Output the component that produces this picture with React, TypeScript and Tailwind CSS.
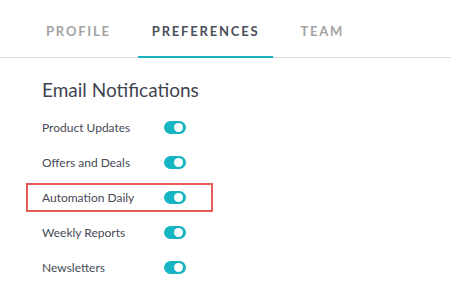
import React from "react";

const Toggle = () => (
  <div className="relative h-[13px] w-[22px] rounded-full bg-[#17b5c1]">
    <div className="absolute right-[3px] top-[2px] h-[9px] w-[9px] rounded-full bg-white" />
  </div>
);

const rows = ["Product Updates", "Offers and Deals", "Automation Daily", "Weekly Reports", "Newsletters"];

export default function App() {
  return (
    <div className="h-[301px] w-[451px] bg-white" style={{ fontFamily: "Lato, 'Open Sans', sans-serif" }}>
      <div className="flex h-[58px] gap-[13px] border-b border-[#dcdcdc] pl-[32px]">
        {["PROFILE", "PREFERENCES", "TEAM"].map((t) => (
          <div
            key={t}
            className={
              "-mb-px flex items-center px-[14px] pt-[7px] text-[13px] font-bold tracking-[1.8px] " +
              (t === "PREFERENCES" ? "border-b-2 border-[#17b5c1] text-[#4b4f5c]" : "border-b-2 border-transparent text-[#a3a3a3]")
            }
          >
            {t}
          </div>
        ))}
      </div>
      <div className="pl-[42px] pt-[20px]">
        <div className="text-[19px] leading-[24px] text-[#3f4452]">Email Notifications</div>
        <div className="mt-[8px] flex flex-col">
          {rows.map((r, i) => (
            <div key={r} className="relative flex h-[35px] items-center">
              {i === 2 && (
                <div className="absolute left-[-16px] top-[3px] h-[29px] w-[187px] border-2 border-[#e85a5a]" />
              )}
              <div className="w-[122px] text-[12px] text-[#454a55]">{r}</div>
              <Toggle />
            </div>
          ))}
        </div>
      </div>
    </div>
  );
}
